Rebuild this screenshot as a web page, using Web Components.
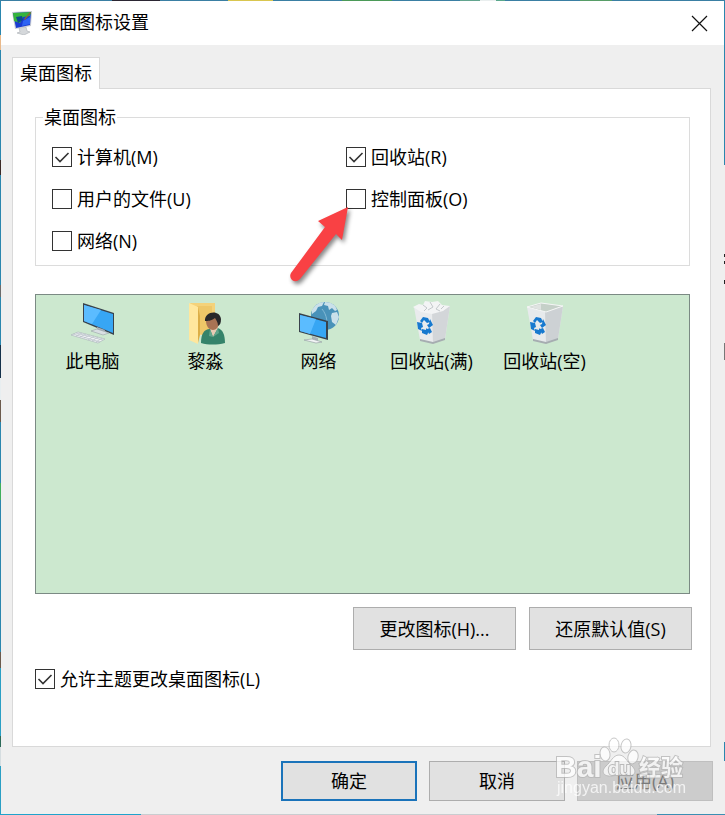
<!DOCTYPE html>
<html lang="zh-CN">
<head>
<meta charset="utf-8">
<meta name="viewport" content="width=device-width, initial-scale=1">
<title>桌面图标设置</title>
<style>
    html, body {
        height: 100%;
        margin: 0;
    }

    body {
        font-family: "Open Sans", "Noto Sans CJK SC", sans-serif;
        font-size: 18px;
        font-weight: 400;
        line-height: 24px;
        color: #000;
        background-color: #efefef;
    }

    svg {
        display: block;
    }
</style>
</head>
<body>
<settings-dialog heading="桌面图标设置" tab="桌面图标">
    <group-box caption="桌面图标">
        <check-field checked>计算机(M)</check-field>
        <check-field checked>回收站(R)</check-field>
        <check-field>用户的文件(U)</check-field>
        <check-field>控制面板(O)<pointer-arrow slot="marker"></pointer-arrow></check-field>
        <check-field>网络(N)</check-field>
    </group-box>

    <icon-list>
        <icon-item label="此电脑">
            <svg width="44" height="44" viewBox="0 0 44 44" aria-hidden="true">
                <path d="M12 2 43 12v22L12 21z" fill="#39424c"/>
                <path d="M13 4 42 13v19L13 20z" fill="#37a6f4"/>
                <path d="M13 4 30 9 21 23 13 20z" fill="#5bbcff"/>
                <path d="m26 26 8 3-1 3-7-2z" fill="#aab3ba"/>
                <path d="m20 30 6-2 12 4-6 2z" fill="#d9dfe3" stroke="#8c969e" stroke-width=".5"/>
                <path d="m7 31 27 7-7 4L0 34z" fill="#f1f3f5" stroke="#a5aeb5" stroke-width=".6"/>
                <path d="m5 32 27 7M2 33l27 8M11 32l-6 3M15 33l-6 3M19 34l-6 3M23 35l-6 4M27 36l-6 4M31 37l-6 4" stroke="#b4bdc6" stroke-width=".7"/>
            </svg>
        </icon-item>
        <icon-item label="黎淼">
            <svg width="44" height="44" viewBox="0 0 44 44" aria-hidden="true">
                <path d="M6 2h25v32H14z" fill="#f4d27a"/>
                <path d="M13 5h15v28H13z" fill="#eec768"/>
                <path d="m5 2 9 4v37l-9-4z" fill="#ffe79d"/>
                <path d="m14 6 2 9v19l-2 8z" fill="#dcae46"/>
                <path d="M17 42c0-9 3-14 9-14l7-1c6 1 8 7 8 15-8 2-17 2-24 0z" fill="#35836a"/>
                <path d="m26 28 3 8 5-9-1-4h-6z" fill="#e9cbb4"/>
                <path d="m26 28 3 8-4-1zM34 27l-5 9 6-4z" fill="#62a68c"/>
                <path d="M22 20c0-8 12-8 13 1 0 5-3 8-6 8-4 0-7-4-7-9z" fill="#a87354"/>
                <path d="M21 20c-1-10 15-12 16-2 0 4-1 6-3 7 0-4-2-6-3-8-4 3-7 3-10 3z" fill="#28282a"/>
            </svg>
        </icon-item>
        <icon-item label="网络">
            <svg width="44" height="44" viewBox="0 0 44 44" aria-hidden="true">
                <circle cx="28" cy="15" r="14" fill="#4992b9"/>
                <path d="M15 9c3-5 7-8 12-8l-2 4-4 1-2 4-4 3zM28 1c6 0 11 3 12 8l-2 1-3-3-3 2-1-4-4-1zM35 12l5-1 2 5-3 8-4-3-1-6z" fill="#d8e9ef" opacity=".9"/>
                <path d="M25 8c5 6 6 14 4 21" fill="none" stroke="#8fc2db" stroke-width=".8"/>
                <path d="m2 12 29 8v19L2 31z" fill="#39424c"/>
                <path d="m3 14 26 7v16L3 30z" fill="#37a6f4"/>
                <path d="m3 14 16 4-6 15-10-3z" fill="#5bbcff"/>
                <path d="m15 35 6 2v3l-6-2z" fill="#a7b0b6"/>
                <path d="m7 39 8-1 10 3-6 1z" fill="#f2f4f5" stroke="#8f999f" stroke-width=".6"/>
            </svg>
        </icon-item>
        <icon-item label="回收站(满)">
            <svg width="44" height="44" viewBox="0 0 44 44" aria-hidden="true">
                <path d="m4 6 18 5 18-6-5 33-12 4-13-3z" fill="#e9ebed"/>
                <path d="m22 11 18-6-5 33-12 4z" fill="#d3d6d9"/>
                <path d="m3 6 6-3 4 1 2-4 7 1 6-1 4 4 8 1-7 5-11 3-11-2z" fill="#f3f4f5"/>
                <path d="m13 4 4 3-3 3M20 1l3 5-5 3M30 3l-4 5 4 2M34 5l-3 3" fill="none" stroke="#c3c8cb" stroke-width="1"/>
                <path d="m10 38 13 3 12-4v2l-12 4-13-3z" fill="#a6adb1"/>
                <g fill="#1779cf">
                    <path d="m10 20 3-4 5 1 2 4-3 1-3-3-2 3zM20 18l3 6-4 3-2-3 2-1zM7 21l5 1 1 4-2 1 1 3-4-2zM12 28l4 1v-2l3 3-2 4-5-2zM20 27l2 4-3 2-2-5z"/>
                </g>
            </svg>
        </icon-item>
        <icon-item label="回收站(空)">
            <svg width="44" height="44" viewBox="0 0 44 44" aria-hidden="true">
                <path d="m4 6 14-4 22 3-5 33-12 4-13-3z" fill="#e7eaec"/>
                <path d="m22 11 18-6-5 33-12 4z" fill="#cdd1d4"/>
                <path d="m4 6 14-4 22 3-17 6z" fill="#c5d0c8" stroke="#f5f6f6"/>
                <path d="m7 6 11-3v6z" fill="#dfe3e1"/>
                <path d="m10 38 13 3 12-4v2l-12 4-13-3z" fill="#a6adb1"/>
                <g fill="#1779cf">
                    <path d="m10 20 3-4 5 1 2 4-3 1-3-3-2 3zM20 18l3 6-4 3-2-3 2-1zM7 21l5 1 1 4-2 1 1 3-4-2zM12 28l4 1v-2l3 3-2 4-5-2zM20 27l2 4-3 2-2-5z"/>
                </g>
            </svg>
        </icon-item>
    </icon-list>

    <button-row>
        <push-button size="large">更改图标(H)...</push-button>
        <push-button size="large">还原默认值(S)</push-button>
    </button-row>

    <check-field checked>允许主题更改桌面图标(L)</check-field>

    <push-button slot="actions" primary>确定</push-button>
    <push-button slot="actions">取消</push-button>
    <push-button slot="actions" disabled>应用(A)</push-button>
    <site-mark slot="mark"></site-mark>
</settings-dialog>

<script>
class SettingsDialog extends HTMLElement {
    constructor() {
        super();
        this.shadowDOM = this.attachShadow({mode: 'open'});
    }

    connectedCallback() {
        this.render();
    }

    render() {
        this.shadowDOM.innerHTML = `
        <style>
            * {
                box-sizing: border-box;
            }

            :host {
                --top: linear-gradient(90deg, #3a7fa3 112px, #2b2633 0 160px, #3a7fa3 0 228px, #d9c64f 0 273px,
                    #3a7fa3 0 342px, #4b9a58 0 392px, #3a7fa3 0 460px, #63a58f 0 480px, #e9eeee 0 496px,
                    #5aa78c 0 505px, #3a7fa3 0 580px, #579d67 0 612px, #3a7fa3 0);
                --left: linear-gradient(#2a86ae 35px, #e9b98a 0 50px, #2a86ae 0 160px, #3b2a26 0 175px,
                    #2a86ae 0 285px, #6b6b6b 0 297px, #2a86ae 0 345px, #14314a 0 378px, #e8eef0 0 400px,
                    #6b5a4c 0 422px, #2a86ae 0 483px, #3fae5c 0 500px, #2a86ae 0 652px, #6b5a4c 0 668px,
                    #2a9fc4 0 736px, #2c6a58 0 747px, #d5dde0 0 766px, #2a9fc4 0);
                --right: linear-gradient(#2a86ae 165px, #efefef 0 254px, #222 0 257px, #efefef 0 261px,
                    #222 0 264px, #efefef 0 280px, #222 0 284px, #efefef 0 343px, #777 0 360px,
                    #efefef 0 742px, #2a86ae 0 761px, #efefef 0);
                --bottom: linear-gradient(90deg, #1fa3cc 141px, #c9cdd0 0 657px, #3a8fb3 0);

                display: flex;
                flex-direction: column;
                position: relative;
                box-sizing: border-box;
                min-height: 100vh;
                border: 1px solid transparent;
                background:
                    linear-gradient(#efefef, #efefef) padding-box,
                    var(--top) top / 100% 1px no-repeat border-box,
                    var(--bottom) bottom / 100% 1px no-repeat border-box,
                    var(--left) left / 1px 100% no-repeat border-box,
                    var(--right) right / 1px 100% no-repeat border-box;
            }

            header {
                display: flex;
                align-items: center;
                gap: 8px;
                height: 44px;
                padding: 0 16px 0 11px;
                background-color: #fff;
            }

            h1 {
                flex: 1;
                margin: 0;
                padding-bottom: 2px;
                font-size: 18px;
                font-weight: inherit;
            }

            svg {
                display: block;
            }

            .close {
                padding: 0;
                border: 0;
                background: none;
            }

            main {
                display: flex;
                flex: 1;
                flex-direction: column;
                padding: 12px 13px 0 11px;
            }

            .tab {
                position: relative;
                z-index: 1;
                align-self: flex-start;
                height: 32px;
                margin-bottom: -1px;
                padding: 0 7px 2px;
                border: 1px solid #d9d9d9;
                border-bottom: 0;
                background-color: #fff;
                font: inherit;
                color: inherit;
            }

            .page {
                flex: 1;
                padding: 16px 20px 16px 22px;
                border: 1px solid #d9d9d9;
                background-color: #fff;
            }

            footer {
                display: flex;
                justify-content: flex-end;
                gap: 12px;
                padding: 14px 11px 13px;
            }
        </style>

        <header>
            <svg width="21" height="24" viewBox="0 0 21 24" aria-hidden="true">
                <path d="m7 17 7-1 1 4 3 1-6 3-7-2 3-1z" fill="#d5d8db" stroke="#aaafb3" stroke-width=".6"/>
                <path d="m0 1 20-1-1 15-16 3z" fill="#c7ccd3"/>
                <path d="m1 2 18-1-1 13-14 3z" fill="#1a3cd2"/>
                <path d="m1 2 18-1-1 4-7 1-3 6-6-2z" fill="#36b43c"/>
                <path d="m4 6 6-1 1 4-5 3z" fill="#0c4b8c"/>
                <path d="m11 10 7-4v7l-8 2z" fill="#2e64f4"/>
                <path d="m12 8 6-7 1 1-6 7z" fill="#8e6535"/>
            </svg>
            <h1></h1>
            <button class="close" aria-label="关闭">
                <svg width="17" height="17" viewBox="0 0 17 17" aria-hidden="true">
                    <path d="m1 1 15 15M16 1 1 16" stroke="#111" stroke-width="1.200"/>
                </svg>
            </button>
        </header>
        <main>
            <button class="tab"></button>
            <section class="page"><slot></slot></section>
        </main>
        <footer><slot name="actions"></slot></footer>
        <slot name="mark"></slot>
        `;
        this.shadowDOM.querySelector('h1').textContent = this.getAttribute('heading');
        this.shadowDOM.querySelector('.tab').textContent = this.getAttribute('tab');
    }
}

class GroupBox extends HTMLElement {
    constructor() {
        super();
        this.shadowDOM = this.attachShadow({mode: 'open'});
    }

    connectedCallback() {
        this.render();
    }

    render() {
        this.shadowDOM.innerHTML = `
        <style>
            :host {
                display: block;
                margin-bottom: 28px;
            }

            fieldset {
                margin: 0;
                padding: 7px 0 3px 16px;
                border: 1px solid #dcdcdc;
                min-width: 0;
            }

            legend {
                margin-left: -9px;
                padding: 0 1px;
            }

            .fields {
                display: grid;
                grid-template-columns: 6fr 7fr;
            }
        </style>

        <fieldset>
            <legend></legend>
            <div class="fields"><slot></slot></div>
        </fieldset>
        `;
        this.shadowDOM.querySelector('legend').textContent = this.getAttribute('caption');
    }
}

class CheckField extends HTMLElement {
    constructor() {
        super();
        this.shadowDOM = this.attachShadow({mode: 'open'});
    }

    connectedCallback() {
        this.render();
    }

    render() {
        this.shadowDOM.innerHTML = `
        <style>
            :host {
                display: flex;
                align-items: center;
                position: relative;
                height: 42px;
            }

            label {
                display: flex;
                align-items: center;
                gap: 5px;
            }

            .box {
                display: grid;
            }

            input, svg {
                grid-area: 1 / 1;
            }

            input {
                appearance: none;
                box-sizing: border-box;
                width: 20px;
                height: 20px;
                margin: 0;
                border: 1px solid #333;
                background-color: #fff;
            }

            svg {
                display: none;
                pointer-events: none;
            }

            input:checked + svg {
                display: block;
            }
        </style>

        <label>
            <span class="box">
                <input type="checkbox">
                <svg width="20" height="20" viewBox="0 0 20 20" aria-hidden="true">
                    <path d="m3.500 10 4.500 4.500L16.500 6" fill="none" stroke="#333" stroke-width="1.600"/>
                </svg>
            </span>
            <span><slot></slot></span>
        </label>
        <slot name="marker"></slot>
        `;
        this.shadowDOM.querySelector('input').checked = this.hasAttribute('checked');
    }
}

// red arrow whose tip touches the lower left corner of the box
class PointerArrow extends HTMLElement {
    constructor() {
        super();
        this.shadowDOM = this.attachShadow({mode: 'open'});
    }

    connectedCallback() {
        this.render();
    }

    render() {
        this.shadowDOM.innerHTML = `
        <style>
            :host {
                position: absolute;
                top: 26px;
                left: -62px;
                z-index: 2;
                pointer-events: none;
            }

            svg {
                display: block;
                filter: drop-shadow(2px 3px 2px #0007);
            }
        </style>

        <svg width="68" height="84" viewBox="0 0 68 84" aria-hidden="true">
            <path d="M64 3 34 17l7 6L7 69q-2 4 1 7 4 3 8-1l36-45 6 6z" fill="#f94144"/>
        </svg>
        `;
    }
}

class IconList extends HTMLElement {
    constructor() {
        super();
        this.shadowDOM = this.attachShadow({mode: 'open'});
    }

    connectedCallback() {
        this.render();
    }

    render() {
        this.shadowDOM.innerHTML = `
        <style>
            :host {
                display: grid;
                grid-template-columns: repeat(auto-fill, 113px);
                align-content: start;
                box-sizing: border-box;
                min-height: 300px;
                margin-bottom: 13px;
                padding-top: 6px;
                border: 1px solid #7b8a84;
                background-color: #cce8cf;
            }
        </style>
        <slot></slot>
        `;
    }
}

class IconItem extends HTMLElement {
    constructor() {
        super();
        this.shadowDOM = this.attachShadow({mode: 'open'});
    }

    connectedCallback() {
        this.render();
    }

    render() {
        this.shadowDOM.innerHTML = `
        <style>
            :host {
                display: flex;
                flex-direction: column;
                align-items: center;
                gap: 4px;
            }
        </style>
        <slot></slot>
        <span></span>
        `;
        this.shadowDOM.querySelector('span').textContent = this.getAttribute('label');
    }
}

class ButtonRow extends HTMLElement {
    constructor() {
        super();
        this.shadowDOM = this.attachShadow({mode: 'open'});
    }

    connectedCallback() {
        this.render();
    }

    render() {
        this.shadowDOM.innerHTML = `
        <style>
            :host {
                display: flex;
                justify-content: flex-end;
                gap: 13px;
                margin: 0 -2px 8px 0;
            }
        </style>
        <slot></slot>
        `;
    }
}

class PushButton extends HTMLElement {
    constructor() {
        super();
        this.shadowDOM = this.attachShadow({mode: 'open'});
    }

    connectedCallback() {
        this.render();
    }

    render() {
        this.shadowDOM.innerHTML = `
        <style>
            :host {
                display: block;
            }

            button {
                display: block;
                box-sizing: border-box;
                min-width: 136px;
                height: 40px;
                padding: 0 8px;
                border: 1px solid #adadad;
                background-color: #e1e1e1;
                font: inherit;
                color: inherit;
            }

            :host([size="large"]) button {
                min-width: 163px;
                height: 43px;
            }

            :host([primary]) button {
                border: 2px solid #1a73ba;
            }

            button:disabled {
                border-color: #bfbfbf;
                background-color: #ccc;
                color: #7a7a7a;
            }
        </style>
        <button><slot></slot></button>
        `;
        this.shadowDOM.querySelector('button').disabled = this.hasAttribute('disabled');
    }
}

class SiteMark extends HTMLElement {
    constructor() {
        super();
        this.shadowDOM = this.attachShadow({mode: 'open'});
    }

    connectedCallback() {
        this.render();
    }

    render() {
        this.shadowDOM.innerHTML = `
        <style>
            :host {
                position: absolute;
                right: 37px;
                bottom: 13px;
                z-index: 3;
                pointer-events: none;
                opacity: .75;
            }

            svg {
                display: block;
            }

            text {
                font-family: "Liberation Sans", "Noto Sans CJK SC", sans-serif;
                font-weight: 700;
                fill: #fff;
                stroke: #b4b4b4;
                stroke-width: 2px;
                paint-order: stroke;
            }

            .url {
                font-weight: 400;
                stroke: none;
            }
        </style>

        <svg width="132" height="64" viewBox="0 0 132 64" aria-hidden="true">
            <g fill="#fff" stroke="#b4b4b4" stroke-width="1">
                <ellipse cx="50" cy="17" rx="5" ry="7" transform="rotate(-10 50 17)"/>
                <ellipse cx="59" cy="8" rx="5" ry="7"/>
                <ellipse cx="71" cy="9" rx="5" ry="7" transform="rotate(10 71 9)"/>
                <ellipse cx="78" cy="20" rx="5" ry="7" transform="rotate(15 78 20)"/>
                <path d="M64 18c6 0 8 7 13 11 6 6 2 11-6 10-5-1-9-1-14 0-8 1-12-4-6-10 5-4 7-11 13-11z"/>
            </g>
            <text x="0" y="40" font-size="30">Bai</text>
            <text x="53" y="38" font-size="19">du</text>
            <text x="84" y="38" font-size="22">经验</text>
            <text class="url" x="2" y="56" font-size="16">jingyan.baidu.com</text>
        </svg>
        `;
    }
}

customElements.define('settings-dialog', SettingsDialog);
customElements.define('group-box', GroupBox);
customElements.define('check-field', CheckField);
customElements.define('pointer-arrow', PointerArrow);
customElements.define('icon-list', IconList);
customElements.define('icon-item', IconItem);
customElements.define('button-row', ButtonRow);
customElements.define('push-button', PushButton);
customElements.define('site-mark', SiteMark);
</script>
</body>
</html>
